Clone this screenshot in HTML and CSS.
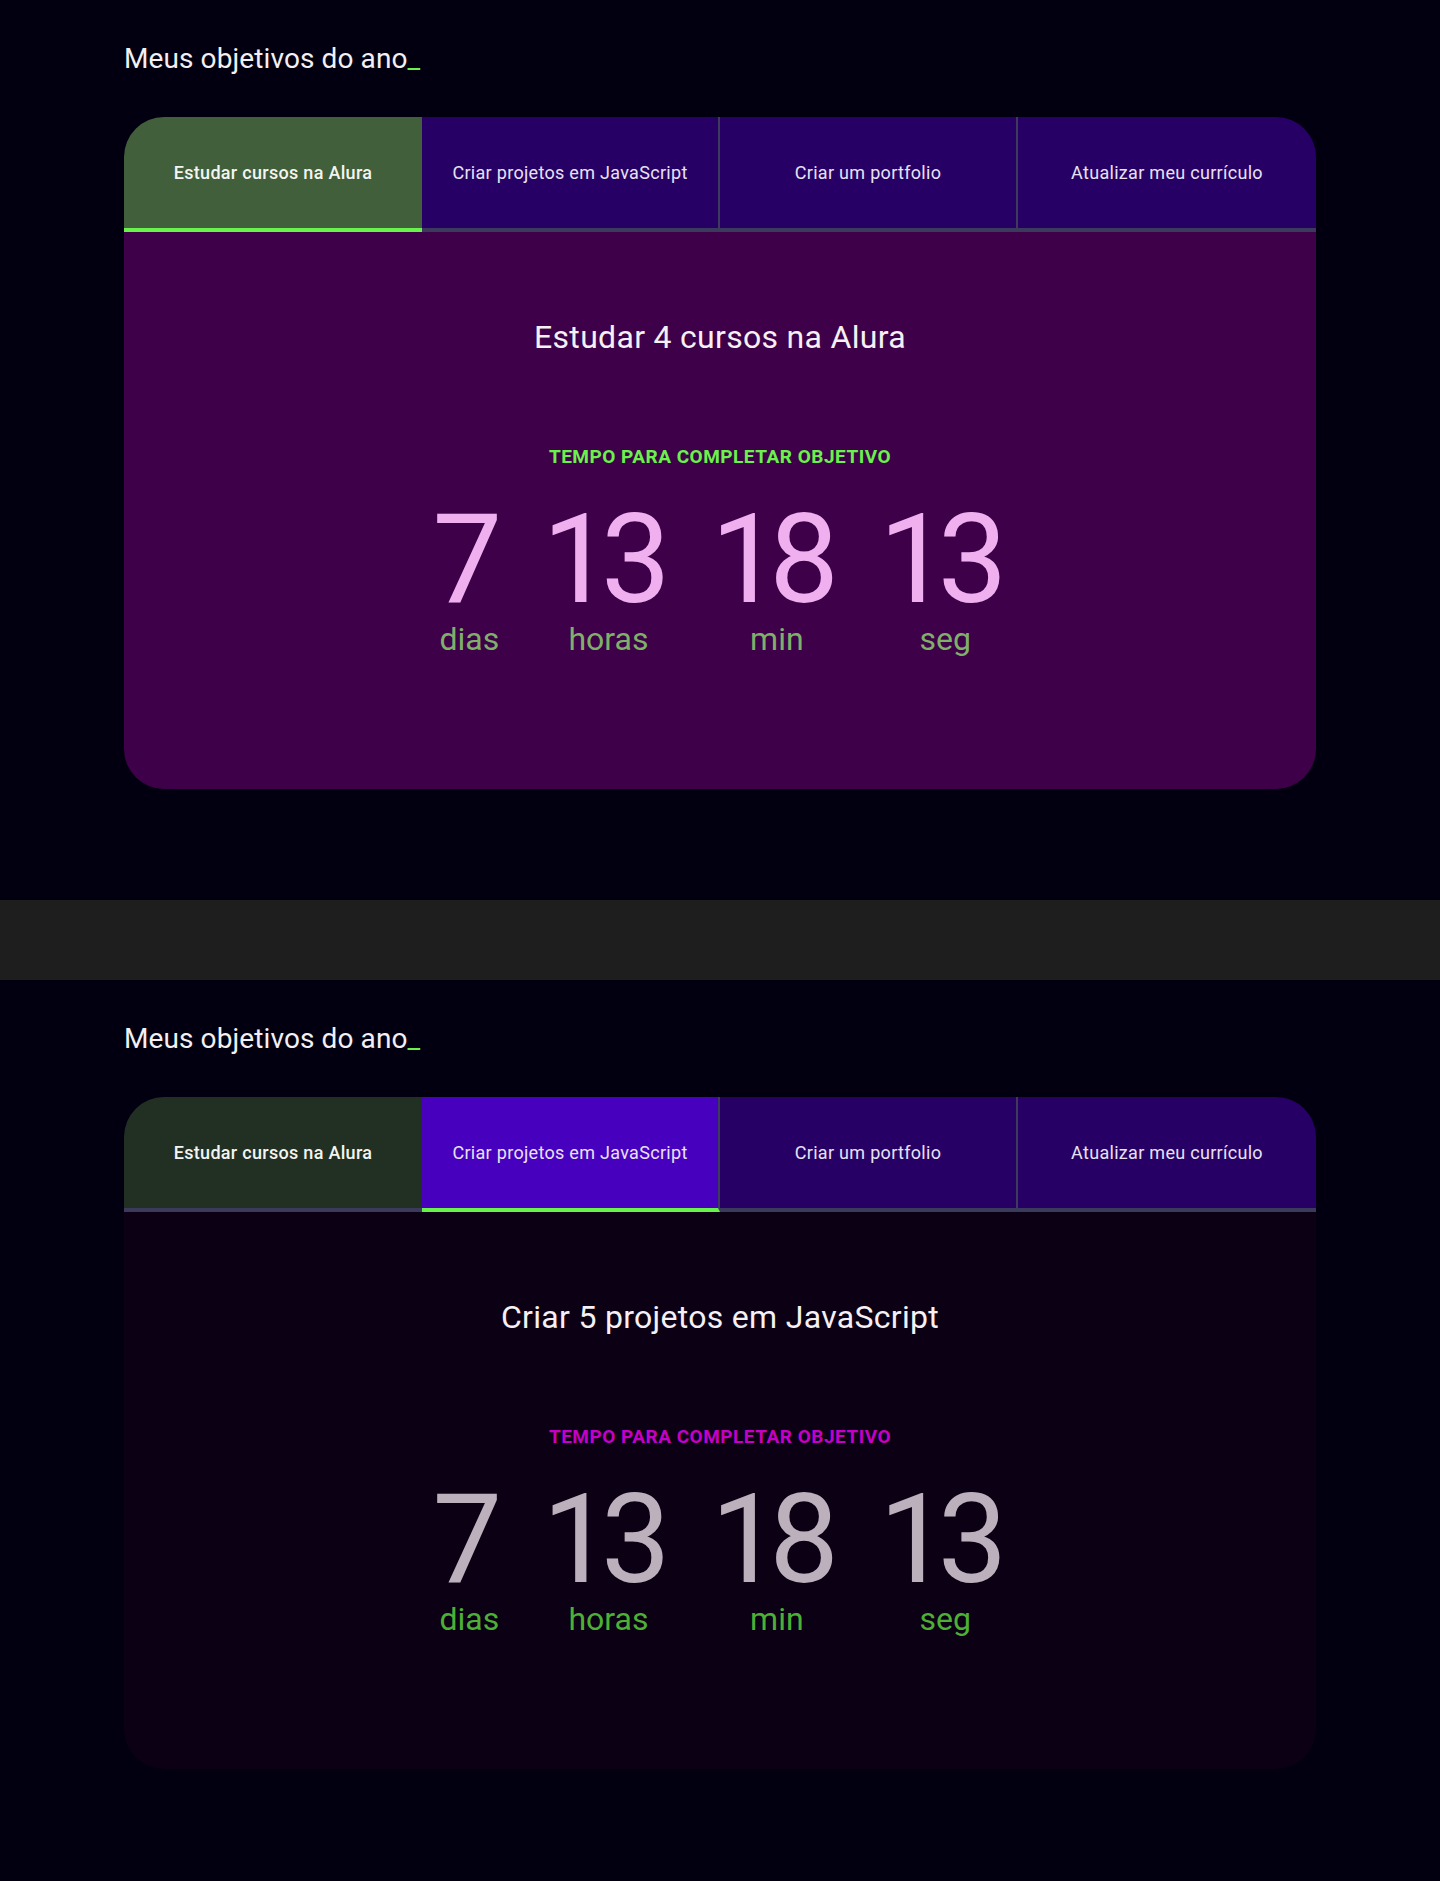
FILE: index.html
```html
<!DOCTYPE html>
<html lang="pt-BR">
<head>
<meta charset="utf-8">
<title>Meus objetivos do ano</title>
<link rel="stylesheet" href="styles.css">
</head>
<body>
<section class="screen screen--first">
  <h1 class="title">Meus objetivos do ano<span class="cursor">_</span></h1>
  <div class="card card--alura">
    <div class="tabs">
      <div class="tab tab--first tab--active">Estudar cursos na Alura</div>
      <div class="tab tab--sep">Criar projetos em JavaScript</div>
      <div class="tab tab--sep">Criar um portfolio</div>
      <div class="tab">Atualizar meu currículo</div>
    </div>
    <div class="panel">
      <h2 class="goal">Estudar 4 cursos na Alura</h2>
      <p class="label">TEMPO PARA COMPLETAR OBJETIVO</p>
      <div class="countdown">
        <div class="unit"><span class="num">7</span><span class="unit-name">dias</span></div>
        <div class="unit"><span class="num">13</span><span class="unit-name">horas</span></div>
        <div class="unit"><span class="num">18</span><span class="unit-name">min</span></div>
        <div class="unit"><span class="num">13</span><span class="unit-name">seg</span></div>
      </div>
    </div>
  </div>
</section>
<div class="divider"></div>
<section class="screen screen--second">
  <h1 class="title">Meus objetivos do ano<span class="cursor">_</span></h1>
  <div class="card card--js">
    <div class="tabs">
      <div class="tab tab--first tab--done">Estudar cursos na Alura</div>
      <div class="tab tab--sep tab--active">Criar projetos em JavaScript</div>
      <div class="tab tab--sep">Criar um portfolio</div>
      <div class="tab">Atualizar meu currículo</div>
    </div>
    <div class="panel">
      <h2 class="goal">Criar 5 projetos em JavaScript</h2>
      <p class="label">TEMPO PARA COMPLETAR OBJETIVO</p>
      <div class="countdown">
        <div class="unit"><span class="num">7</span><span class="unit-name">dias</span></div>
        <div class="unit"><span class="num">13</span><span class="unit-name">horas</span></div>
        <div class="unit"><span class="num">18</span><span class="unit-name">min</span></div>
        <div class="unit"><span class="num">13</span><span class="unit-name">seg</span></div>
      </div>
    </div>
  </div>
</section>
</body>
</html>
```

FILE: styles.css
```css
* { box-sizing: border-box; }

html, body {
  margin: 0;
  padding: 0;
}

body {
  background: #020010;
  font-family: Roboto, "Liberation Sans", sans-serif;
  color: #f2eef2;
}

.screen {
  height: 900px;
  padding: 42px 124px 0;
}

.screen--second {
  height: 901px;
}

.divider {
  height: 80px;
  background: #1e1e1e;
}

.title {
  margin: 0;
  font-size: 28px;
  font-weight: 400;
  line-height: 1.2;
  color: #f2f0f4;
  letter-spacing: 0.1px;
}

.cursor {
  color: #6af24c;
}

.card {
  margin-top: 41px;
  height: 672px;
  border-radius: 40px;
  overflow: hidden;
  display: flex;
  flex-direction: column;
}

.tabs {
  display: grid;
  grid-template-columns: repeat(4, 1fr);
  height: 115px;
  flex: none;
}

.tab {
  display: flex;
  align-items: center;
  justify-content: center;
  background: #260064;
  border-bottom: 4px solid #3b395c;
  font-size: 18px;
  font-weight: 400;
  letter-spacing: 0.3px;
  color: #e8e2f2;
}

.tab--sep {
  border-right: 2px solid #3d3a5e;
}

.tab--first {
  font-weight: 500;
  color: #f4f4f0;
}

.card--alura .tab--active {
  background: #415f3a;
  border-bottom-color: #6af24c;
}

.card--js .tab--done {
  background: #223024;
}

.card--js .tab--active {
  background: #4700be;
  border-bottom-color: #6af24c;
}

.panel {
  flex: 1;
  display: flex;
  flex-direction: column;
  align-items: center;
  padding-top: 86px;
}

.card--alura .panel { background: #3e0048; }
.card--js .panel { background: #0c0014; }

.goal {
  margin: 0;
  font-size: 32px;
  font-weight: 400;
  line-height: 1.2;
  letter-spacing: 0.3px;
  color: #f4f0f4;
}

.label {
  margin: 90px 0 0;
  font-size: 19px;
  font-weight: 700;
  line-height: 1.2;
  letter-spacing: 0.5px;
}

.card--alura .label { color: #6af24c; }
.card--js .label { color: #c400c8; }

.countdown {
  margin-top: 32px;
  display: flex;
  gap: 40px;
}

.unit {
  display: flex;
  flex-direction: column;
  align-items: center;
}

.num {
  font-size: 124px;
  font-weight: 400;
  line-height: 0.95;
  letter-spacing: -11px;
  margin-right: 11px;
}

.unit-name {
  margin-top: 4px;
  padding-left: 4px;
  font-size: 32px;
  line-height: 1;
}

.card--alura .num { color: #f0b0f0; }
.card--alura .unit-name { color: #7fb06a; }
.card--js .num { color: #bcb0bc; }
.card--js .unit-name { color: #4cb035; }
```
